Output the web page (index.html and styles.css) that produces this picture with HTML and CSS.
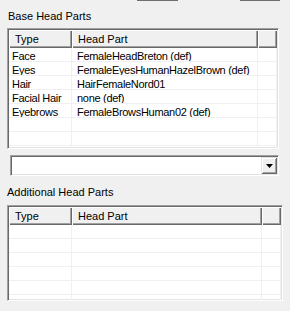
FILE: index.html
```html
<!DOCTYPE html>
<html lang="en">
<head>
    <meta charset="UTF-8">
    <title>Head Parts</title>
    <link rel="stylesheet" href="styles.css">
</head>
<body>
    <div class="button-stubs">
        <div class="stub stub-one"></div>
        <div class="stub stub-two"></div>
    </div>

    <div class="group-label base-label">Base Head Parts</div>

    <div class="list-view base-list">
        <div class="list-row list-header">
            <div class="head-cell">Type</div>
            <div class="head-cell">Head Part</div>
            <div class="head-cell"></div>
        </div>
        <div class="list-row">
            <div class="cell">Face</div>
            <div class="cell part">FemaleHeadBreton (def)</div>
            <div class="cell"></div>
        </div>
        <div class="list-row">
            <div class="cell">Eyes</div>
            <div class="cell part">FemaleEyesHumanHazelBrown (def)</div>
            <div class="cell"></div>
        </div>
        <div class="list-row">
            <div class="cell">Hair</div>
            <div class="cell part">HairFemaleNord01</div>
            <div class="cell"></div>
        </div>
        <div class="list-row">
            <div class="cell">Facial Hair</div>
            <div class="cell part">none (def)</div>
            <div class="cell"></div>
        </div>
        <div class="list-row">
            <div class="cell">Eyebrows</div>
            <div class="cell part">FemaleBrowsHuman02 (def)</div>
            <div class="cell"></div>
        </div>
        <div class="list-row"><div class="cell"></div><div class="cell"></div><div class="cell"></div></div>
        <div class="list-row"><div class="cell"></div><div class="cell"></div><div class="cell"></div></div>
        <div class="list-row"><div class="cell"></div><div class="cell"></div><div class="cell"></div></div>
    </div>

    <div class="combo">
        <div class="combo-text"></div>
        <div class="combo-button">
            <svg width="7" height="4" viewBox="0 0 7 4"><path d="M0 0h7l-3.5 4z" fill="#000"/></svg>
        </div>
    </div>

    <div class="group-label extra-label">Additional Head Parts</div>

    <div class="list-view extra-list">
        <div class="list-row list-header">
            <div class="head-cell">Type</div>
            <div class="head-cell">Head Part</div>
            <div class="head-cell"></div>
        </div>
        <div class="list-row"><div class="cell"></div><div class="cell"></div><div class="cell"></div></div>
        <div class="list-row"><div class="cell"></div><div class="cell"></div><div class="cell"></div></div>
        <div class="list-row"><div class="cell"></div><div class="cell"></div><div class="cell"></div></div>
        <div class="list-row"><div class="cell"></div><div class="cell"></div><div class="cell"></div></div>
        <div class="list-row"><div class="cell"></div><div class="cell"></div><div class="cell"></div></div>
        <div class="list-row"><div class="cell"></div><div class="cell"></div><div class="cell"></div></div>
    </div>
</body>
</html>
```

FILE: styles.css
```css
body {
    margin: 0;
    padding: 0;
    background-color: #f0f0f0;
    font-family: 'Liberation Sans', Arial, sans-serif;
    font-size: 11px;
    color: #000;
    overflow: hidden;
}

/* bottoms of the buttons above, cut off by the window */
.button-stubs {
    display: flex;
    height: 1px;
}

.stub {
    height: 1px;
    background-color: #6e6e6e;
}

.stub-one {
    margin-left: 137px;
    width: 41px;
}

.stub-two {
    margin-left: 62px;
    width: 40px;
}

.group-label {
    line-height: 13px;
    padding-left: 8px;
}

.base-label {
    margin-top: 9px;
    margin-bottom: 5px;
}

.extra-label {
    margin-top: 10px;
    margin-bottom: 6px;
    padding-left: 7px;
}

/* sunken list view */
.list-view {
    margin-left: 7px;
    box-sizing: border-box;
    background-color: #fff;
    border: 1px solid;
    border-color: #a0a0a0 #fff #fff #a0a0a0;
    box-shadow: inset 1px 1px #696969, inset -1px -1px #e3e3e3;
    padding: 1px;
    overflow: hidden;
}

.base-list {
    width: 272px;
    height: 121px;
}

.extra-list {
    width: 276px;
    height: 96px;
}

.list-row {
    display: grid;
    height: 14px;
    box-sizing: border-box;
    border-bottom: 1px solid #f0f0f0;
}

.base-list .list-row {
    grid-template-columns: 63px 186px 1fr;
}

.extra-list .list-row {
    grid-template-columns: 63px 190px 1fr;
}

.list-row.list-header {
    height: 18px;
    border-bottom: none;
}

.head-cell {
    background-color: #f0f0f0;
    line-height: 18px;
    padding-left: 6px;
    box-shadow: inset 1px 1px #fff, inset -1px -1px #696969, inset -2px -2px #a0a0a0;
    white-space: nowrap;
}

.cell {
    border-right: 1px solid #f0f0f0;
    line-height: 14px;
    padding-left: 3px;
    padding-top: 1px;
    letter-spacing: -0.3px;
    white-space: nowrap;
    overflow: hidden;
}

.cell.part {
    padding-left: 5px;
}

/* drop-down combo */
.combo {
    display: flex;
    margin: 6px 0 0 10px;
    width: 269px;
    height: 21px;
    box-sizing: border-box;
    background-color: #fff;
    border: 1px solid;
    border-color: #a0a0a0 #fff #fff #a0a0a0;
    box-shadow: inset 1px 1px #696969, inset -1px -1px #e3e3e3;
    padding: 1px;
}

.combo-text {
    flex: 1;
}

.combo-button {
    width: 16px;
    display: flex;
    align-items: center;
    justify-content: center;
    background-color: #f0f0f0;
    box-shadow: inset 1px 1px #e3e3e3, inset -1px -1px #696969, inset 2px 2px #fff, inset -2px -2px #a0a0a0;
}
```
